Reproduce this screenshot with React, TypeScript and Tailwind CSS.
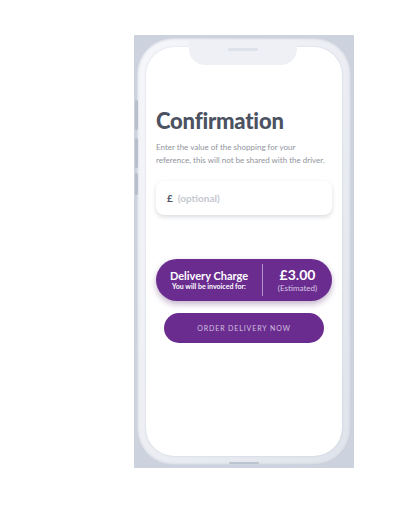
export default function App() {
  return (
    <div className="h-[532px] w-[416px] bg-white pl-[134px] pt-[35px]" style={{ fontFamily: 'Lato, "Noto Sans", sans-serif' }}>
      <div className="h-[433px] w-[220px] bg-[#cdd3de] p-[3px]">
        <div className="relative h-full w-full rounded-[36px] bg-gradient-to-br from-[#f6f7fb] via-[#eceef4] to-[#dfe3eb] p-[9px] shadow-[inset_0_0_3px_rgba(120,130,150,0.5)]">
          {/* side buttons */}
          <div className="absolute left-[-2px] top-[62px] h-[30px] w-[3px] rounded-sm bg-[#b7bfcd]" />
          <div className="absolute left-[-2px] top-[100px] h-[30px] w-[3px] rounded-sm bg-[#b7bfcd]" />
          <div className="absolute left-[-2px] top-[135px] h-[22px] w-[3px] rounded-sm bg-[#b7bfcd]" />
          <div className="relative flex h-full w-full flex-col rounded-[28px] bg-white px-[10px] pt-[60px] shadow-[0_0_2px_rgba(150,160,180,0.4)]">
            {/* notch */}
            <div className="absolute left-[43px] top-[-7px] flex h-[25px] w-[108px] items-start justify-center rounded-b-[16px] bg-[#eef0f5] pt-[8px]">
              <div className="h-[3px] w-[30px] rounded-full bg-[#dde1e9]" />
            </div>
            <h1 className="text-[22px] font-black leading-[28px] tracking-[-0.2px] text-[#4b5262]">Confirmation</h1>
            <p className="mt-[6px] text-[8px] leading-[13px] text-[#8f949d]">
              Enter the value of the shopping for your
              <br />
              reference, this will not be shared with the driver.
            </p>
            <div className="mt-[14px] flex h-[34px] items-center rounded-[8px] bg-white px-[11px] text-[10px] font-bold shadow-[0_2px_4px_rgba(80,90,110,0.22)]">
              <span className="text-[#4b5262]">£</span>
              <span className="ml-[5px] text-[#c4c8cf]">(optional)</span>
            </div>
            <div className="mt-[44px] flex h-[42px] items-center rounded-full bg-[#6a2c8f] shadow-[0_3px_6px_rgba(80,40,110,0.35)]">
              <div className="flex w-[106px] flex-col items-center">
                <span className="text-[11px] font-bold leading-[13px] text-white">Delivery Charge</span>
                <span className="text-[7px] font-bold leading-[9px] text-white">You will be invoiced for:</span>
              </div>
              <div className="h-[32px] w-px bg-[#b493cc]" />
              <div className="flex flex-1 flex-col items-center">
                <span className="text-[14px] font-bold leading-[16px] text-white">£3.00</span>
                <span className="text-[8px] leading-[10px] text-[#d9c8e6]">(Estimated)</span>
              </div>
            </div>
            <div className="mx-[8px] mt-[12px] flex h-[30px] items-center justify-center rounded-full bg-[#6a2c8f] text-[7px] tracking-[0.9px] text-[#d2c0e0]">
              ORDER DELIVERY NOW
            </div>
          </div>
          <div className="absolute bottom-[1px] left-[92px] h-[2px] w-[30px] rounded-full bg-[#bdc4d1]" />
        </div>
      </div>
    </div>
  )
}
